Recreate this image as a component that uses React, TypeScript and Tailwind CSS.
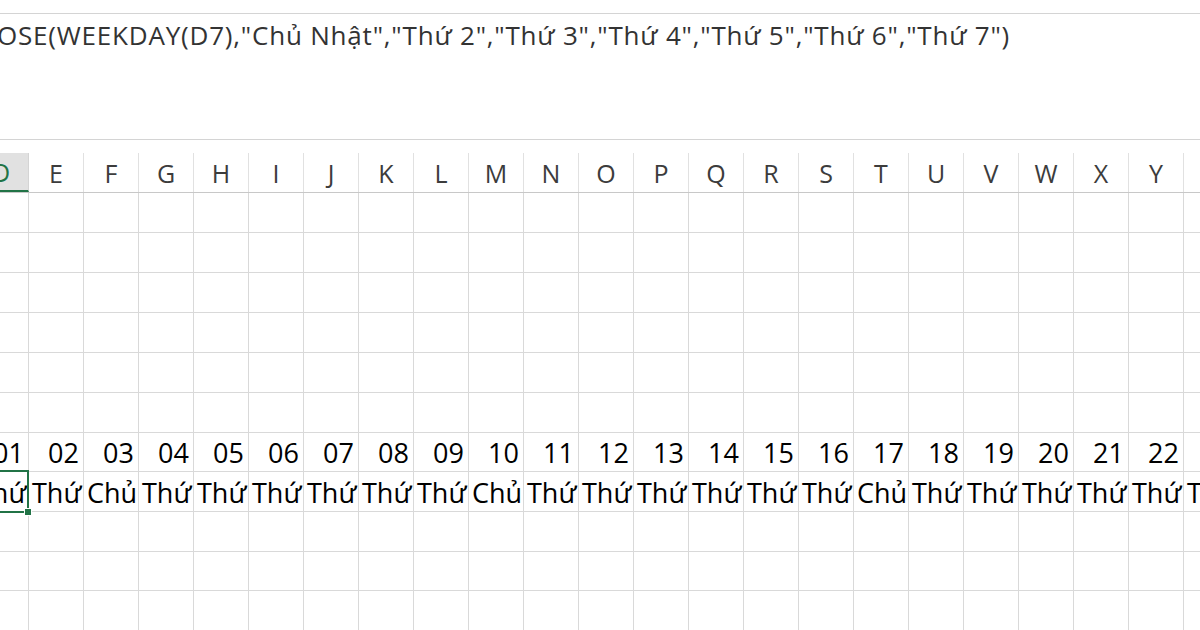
import React from 'react';

const COLS = ['D', 'E', 'F', 'G', 'H', 'I', 'J', 'K', 'L', 'M', 'N', 'O', 'P', 'Q', 'R', 'S', 'T', 'U', 'V', 'W', 'X', 'Y', 'Z'];
// bottom-border inclusive heights of the visible rows
const ROW_HEIGHTS = [40, 40, 40, 40, 40, 40, 39, 40, 40, 39, 40];
const NUMBER_ROW = 6;
const DAY_ROW = 7;

const dayName = (n: number) => {
  const d = (n - 3 + 700) % 7;
  return d === 0 ? 'Chủ Nhật' : `Thứ ${d + 1}`;
};

const FORMULA = 'OSE(WEEKDAY(D7),"Chủ Nhật","Thứ 2","Thứ 3","Thứ 4","Thứ 5","Thứ 6","Thứ 7")';

const App: React.FC = () => {
  return (
    <div className="w-[1200px] h-[630px] overflow-hidden bg-white font-['Open_Sans',sans-serif]">
      {/* formula bar */}
      <div className="h-[13px]" />
      <div className="h-[127px] border-t border-b border-[#d4d4d4] overflow-hidden">
        <div className="ml-[-3px] pt-[6px] text-[26px] leading-[30px] text-[#333] whitespace-nowrap tracking-[0.8px]">
          {FORMULA}
        </div>
      </div>

      <div className="h-[13px]" />

      {/* column headers */}
      <div className="flex ml-[-26px] h-[40px] border-b border-[#c8c8c8]">
        {COLS.map((c, i) => (
          <div
            key={c}
            className={
              i === 0
                ? 'w-[55px] shrink-0 border-r border-[#d4d4d4] bg-[#e1e1e1] border-b-2 border-b-[#217346] text-[#217346] flex items-center justify-center pt-[3px] text-[25px]'
                : 'w-[55px] shrink-0 border-r border-[#e1e1e1] text-[#3c3c3c] flex items-center justify-center pt-[3px] text-[25px]'
            }
          >
            {c}
          </div>
        ))}
      </div>

      {/* grid */}
      {ROW_HEIGHTS.map((h, r) => (
        <div key={r} className="flex ml-[-26px] border-b border-[#d9d9d9]" style={{ height: h }}>
          {COLS.map((c, i) => {
            const n = i + 1;
            return (
              <div
                key={c}
                className="relative w-[55px] shrink-0 border-r border-[#d9d9d9] flex items-end"
              >
                {r === NUMBER_ROW && (
                  <div className="w-full text-right pr-[4px] pb-[3px] text-[27px] leading-[30px] text-black">
                    {String(n).padStart(2, '0')}
                  </div>
                )}
                {r === DAY_ROW && (
                  <div className="w-full overflow-hidden whitespace-nowrap pl-[3px] pb-[3px] text-[27px] leading-[30px] text-black">
                    {dayName(n)}
                  </div>
                )}
                {r === DAY_ROW && i === 0 && (
                  <>
                    <div className="absolute z-10 left-[-2px] top-[-2px] right-[-1px] bottom-[-2px] border-2 border-[#217346]" />
                    <div className="absolute z-20 right-[-4px] bottom-[-5px] w-[8px] h-[8px] bg-[#217346] border border-white" />
                  </>
                )}
              </div>
            );
          })}
        </div>
      ))}
    </div>
  );
};

export default App;
